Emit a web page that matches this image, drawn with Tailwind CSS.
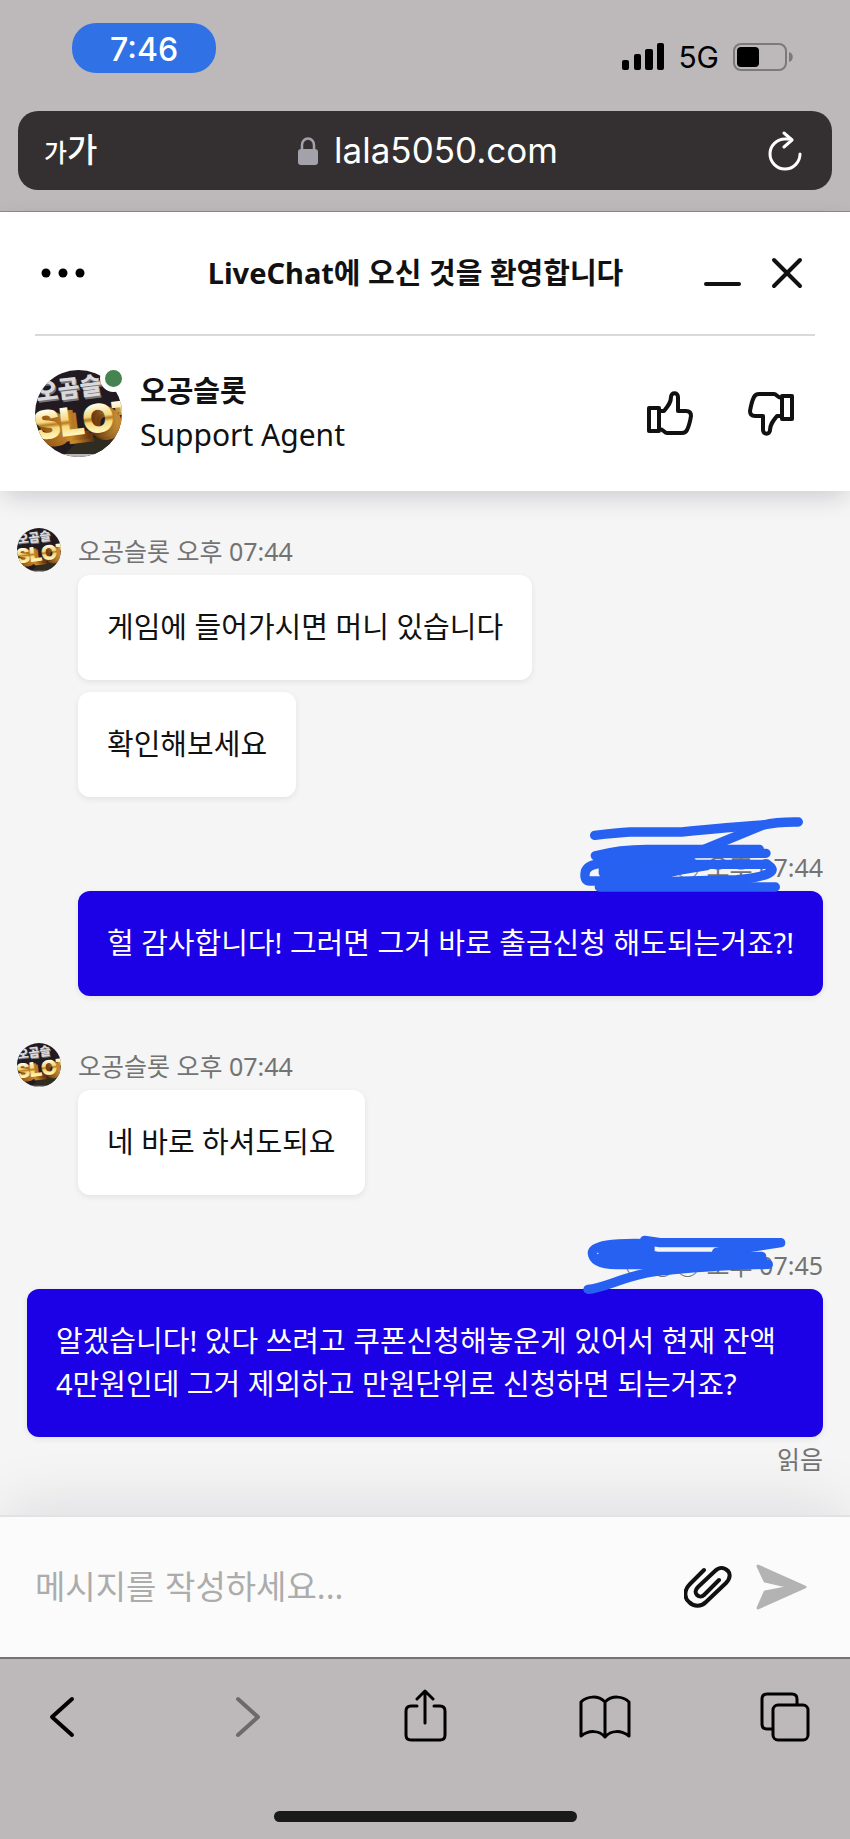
<!DOCTYPE html>
<html lang="ko">

<head>
    <meta charset="UTF-8">
    <meta name="viewport" content="width=device-width, initial-scale=1">
    <title>LiveChat</title>
    <script src="https://cdn.jsdelivr.net/npm/@tailwindcss/browser@4"></script>
</head>

<body class="min-h-screen flex flex-col bg-[#bdb9ba] text-[#111111] font-['Noto_Sans','Noto_Sans_CJK_KR',sans-serif]">

    <!-- Shared avatar artwork -->
    <svg class="absolute size-0" aria-hidden="true">
        <defs>
            <linearGradient id="gold" x1="0" y1="0" x2="0" y2="1">
                <stop offset="0.2" stop-color="#fffbe0" />
                <stop offset="0.45" stop-color="#f3d77c" />
                <stop offset="0.52" stop-color="#b87a24" />
                <stop offset="0.6" stop-color="#f5d878" />
                <stop offset="0.8" stop-color="#fff3b8" />
            </linearGradient>
            <linearGradient id="side" x1="0" y1="0" x2="1" y2="0">
                <stop offset="0" stop-color="#8a4f10" />
                <stop offset="0.3" stop-color="#c98a2c" />
                <stop offset="0.5" stop-color="#5c2d0a" />
                <stop offset="0.8" stop-color="#d09a3c" />
                <stop offset="1" stop-color="#6d3b0c" />
            </linearGradient>
            <clipPath id="round">
                <circle cx="43.5" cy="43.5" r="43.5" />
            </clipPath>
        </defs>
        <symbol id="avatar" viewBox="0 0 87 87">
            <g clip-path="url(#round)">
                <rect width="87" height="87" fill="#211a20" />
                <path d="M0 84h87v3H0z" fill="#b9b5b5" />
                <path d="M40 74l30-10 17 8v12H30z" fill="#2f2d22" />
                <g transform="rotate(-7 4 32)" font-family="'Noto Sans CJK KR', sans-serif" font-weight="900" font-size="24">
                    <text x="3" y="33" fill="#77757a">오곰슬</text>
                    <text x="2" y="31" fill="#d9d9dc">오곰슬</text>
                </g>
                <g transform="rotate(-7 3 74)" font-family="'Liberation Sans', sans-serif" font-weight="700" font-size="39">
                    <g fill="url(#side)" stroke="url(#side)" stroke-width="4">
                        <text x="8" y="76">SLOT</text>
                        <text x="5" y="73">SLOT</text>
                    </g>
                    <text x="1" y="69" fill="url(#gold)" stroke="url(#gold)" stroke-width="2">SLOT</text>
                </g>
            </g>
        </symbol>
    </svg>

    <!-- Phone status bar and address bar -->
    <header class="border-b border-[#8d8a8b] pt-[23px] pb-[21px] font-['Inter','Noto_Sans_CJK_KR',sans-serif]">
        <div class="flex justify-between pl-[72px] pr-[56px]">
            <div class="w-[144px] h-[50px] pt-1 rounded-[24px] bg-[#3072e6] text-white text-[32px] leading-[46px] font-medium text-center">7:46</div>
            <div class="flex items-center pt-[17px] text-black">
                <svg class="w-[42px] h-[28px]" viewBox="0 0 42 28">
                    <rect x="0" y="17" width="7" height="10" rx="2" />
                    <rect x="12" y="11" width="7" height="16" rx="2" />
                    <rect x="23" y="6" width="8" height="21" rx="2" />
                    <rect x="35" y="0" width="7" height="27" rx="2" />
                </svg>
                <span class="ml-[14px] text-[30px] leading-8">5G</span>
                <svg class="ml-[14px] w-[61px] h-[28px]" viewBox="0 0 61 28">
                    <rect x="1" y="1" width="52" height="26" rx="7" fill="none" stroke="#7d797b" stroke-width="2" />
                    <rect x="4" y="4" width="22" height="20" rx="4" />
                    <path d="M56 9c5 1 5 9 0 10z" fill="#7d797b" />
                </svg>
            </div>
        </div>
        <div class="mx-[18px] mt-[38px] h-[79px] rounded-[20px] bg-[#342f30] text-white flex items-center justify-between pl-[26px] pr-[30px]">
            <button type="button" class="w-[70px] text-left font-medium flex items-baseline" aria-label="텍스트 크기">
                <span class="text-[25px]">가</span><span class="text-[33px]">가</span>
            </button>
            <a href="#" class="flex items-center text-[35px]">
                <svg class="w-[20px] h-[28px] mr-4" viewBox="0 0 20 28">
                    <rect x="0" y="12" width="20" height="16" rx="3" fill="#a3a1a9" />
                    <path d="M4 13V8a6 6.500 0 0 1 12 0v5" fill="none" stroke="#a3a1a9" stroke-width="2.500" />
                </svg>
                lala5050.com
            </a>
            <button type="button" class="w-[60px] flex justify-end" aria-label="새로고침">
                <svg class="w-[34px] h-[40px]" viewBox="0 0 34 40" fill="none" stroke="white" stroke-width="3" stroke-linecap="round" stroke-linejoin="round">
                    <path d="M23 8h-6a15 15 0 1 0 15 15" />
                    <path d="M16 2l8 7-8 7" />
                </svg>
            </button>
        </div>
    </header>

    <!-- Chat header -->
    <section class="relative z-10 bg-white px-[35px] shadow-[0_8px_24px_-4px_rgba(20,20,50,0.2)]">
        <div class="h-[124px] border-b-2 border-[#d9d9d9] flex items-center justify-between pr-3 pl-[6px]">
            <button type="button" class="w-[86px]" aria-label="메뉴">
                <svg class="w-[48px] h-[12px]" viewBox="0 0 48 12">
                    <circle cx="5" cy="6" r="4.500" />
                    <circle cx="22" cy="6" r="4.500" />
                    <circle cx="39" cy="6" r="4.500" />
                </svg>
            </button>
            <h1 class="text-[29px] leading-[44px] font-bold">LiveChat에 오신 것을 환영합니다</h1>
            <div class="flex gap-[29px]">
                <button type="button" aria-label="최소화">
                    <svg class="w-[38px] h-[34px]" viewBox="0 0 38 34">
                        <path d="M2 28h33" stroke="#111" stroke-width="4" stroke-linecap="round" />
                    </svg>
                </button>
                <button type="button" aria-label="닫기">
                    <svg class="w-[32px] h-[34px]" viewBox="0 0 32 34">
                        <path d="M3 4l26 26M29 4L3 30" stroke="#111" stroke-width="4" stroke-linecap="round" />
                    </svg>
                </button>
            </div>
        </div>
        <div class="flex items-center pt-[33px] pb-[34px] pr-[21px]">
            <div class="relative size-[87px]">
                <svg class="size-full">
                    <use href="#avatar" />
                </svg>
                <span class="absolute -top-[5px] -right-[5px] size-[27px] rounded-full bg-[#458351] border-5 border-white"></span>
            </div>
            <div class="ml-[18px] grow leading-[44px]">
                <p class="text-[29px] font-bold">오공슬롯</p>
                <p class="text-[30px]">Support Agent</p>
            </div>
            <div class="flex gap-[55px]">
                <button type="button" aria-label="좋아요">
                    <svg class="w-[46px] h-[46px]" viewBox="0 0 46 46" fill="none" stroke="#111" stroke-width="4" stroke-linejoin="round">
                        <path d="M2 18h10v23H2z" />
                        <path d="M12 21h5c5-6 7-9 7-14 0-5 7-5 7 0v14h8c4 0 5 2 5 5-1 6-2 10-4 14-1 2-2 3-5 3H20c-3 0-3-4-8-4" />
                    </svg>
                </button>
                <button type="button" aria-label="싫어요">
                    <svg class="w-[46px] h-[46px] rotate-180" viewBox="0 0 46 46" fill="none" stroke="#111" stroke-width="4" stroke-linejoin="round">
                        <path d="M2 17h10v23H2z" />
                        <path d="M12 20h5c5-6 7-9 7-14 0-5 7-5 7 0v14h8c4 0 5 2 5 5-1 6-2 10-4 14-1 2-2 3-5 3H20c-3 0-3-4-8-4" />
                    </svg>
                </button>
            </div>
        </div>
    </section>

    <!-- Messages -->
    <main class="grow bg-[#f5f5f5] pt-9 pb-[34px] flex flex-col gap-[46px] text-[29px] leading-[43px] break-keep overflow-hidden">
        <div class="flex gap-[17px] px-[17px]">
            <svg class="mt-px size-[44px] shrink-0">
                <use href="#avatar" />
            </svg>
            <div class="flex flex-col items-start gap-3">
                <div>
                    <p class="text-[25px] leading-[48px] text-[#737373]">오공슬롯 오후 07:44</p>
                    <p class="bg-white rounded-[12px] px-[29px] pt-[30px] pb-[32px] shadow-[0_2px_6px_rgba(0,0,0,0.08)]">게임에 들어가시면 머니 있습니다</p>
                </div>
                <p class="bg-white rounded-[12px] px-[29px] pt-[30px] pb-[32px] shadow-[0_2px_6px_rgba(0,0,0,0.08)]">확인해보세요</p>
            </div>
        </div>

        <div class="flex flex-col items-end px-[27px]">
            <div class="relative z-10 text-[25px] leading-[48px] text-[#737373]">
                ○○○ 오후 07:44
                <!-- Pen marks over the visitor's name -->
                <svg class="absolute right-0 -top-[30px] w-[250px] h-[80px]" viewBox="69 36 750 240" fill="none" stroke="#2761f2" stroke-width="28" stroke-linecap="round" stroke-linejoin="round">
                    <path d="M134 103Q200 95 240 93H395Q540 78 640 72 680 62 745 63" />
                    <path d="M640 72L460 146" />
                    <path d="M136 164Q210 145 290 145H628M150 168L400 158 648 157" />
                    <path d="M160 190L420 172M330 190L650 190Q680 205 655 218 620 232 560 236L200 246" />
                    <path d="M145 188Q105 195 105 220 103 240 120 240H190L470 194" />
                    <path d="M160 185V215Q165 230 190 222L330 222 440 194" fill="#2761f2" />
                    <path d="M148 258H676M200 240L560 244" />
                </svg>
            </div>
            <p class="bg-[#1c00e6] text-white rounded-[12px] px-[29px] pt-[30px] pb-[32px] shadow-[0_2px_6px_rgba(0,0,0,0.08)]">헐 감사합니다! 그러면 그거 바로 출금신청 해도되는거죠?!</p>
        </div>

        <div class="flex gap-[17px] px-[17px]">
            <svg class="mt-px size-[44px] shrink-0">
                <use href="#avatar" />
            </svg>
            <div>
                <p class="text-[25px] leading-[48px] text-[#737373]">오공슬롯 오후 07:44</p>
                <p class="bg-white rounded-[12px] px-[29px] pt-[30px] pb-[32px] shadow-[0_2px_6px_rgba(0,0,0,0.08)]">네 바로 하셔도되요</p>
            </div>
        </div>

        <div class="flex flex-col items-end px-[27px]">
            <div class="relative z-10 text-[25px] leading-[48px] text-[#737373]">
                ○○○ 오후 07:45
                <svg class="absolute right-0 -top-[10px] w-[250px] h-[64px]" viewBox="69 60 750 192" fill="none" stroke="#2761f2" stroke-width="28" stroke-linecap="round" stroke-linejoin="round">
                    <path d="M284 88L330 95H692L500 124" />
                    <path d="M300 98Q128 92 127 126 130 160 200 161H400L300 130Z" fill="#2761f2" />
                    <path d="M160 136H635M250 152H640" />
                    <path d="M655 160Q400 167 290 186C200 205 160 232 114 235" />
                    <path d="M400 160L290 184" />
                    <circle cx="143" cy="127" r="1" stroke="#f5f5f5" stroke-width="2" />
                </svg>
            </div>
            <p class="bg-[#1c00e6] text-white rounded-[12px] px-[29px] pt-[30px] pb-[32px] shadow-[0_2px_6px_rgba(0,0,0,0.08)]">알겠습니다! 있다 쓰려고 쿠폰신청해놓운게 있어서 현재 잔액 4만원인데 그거 제외하고 만원단위로 신청하면 되는거죠?</p>
            <p class="text-[25px] leading-[44px] text-[#737373]">읽음</p>
        </div>
    </main>

    <!-- Message box -->
    <form class="relative h-[142px] border-t-2 border-[#e2e2e4] bg-[#fbfbfb] pl-[35px] pr-[43px] flex items-center shadow-[0_-16px_60px_-6px_rgba(20,20,50,0.1)]">
        <input type="text" aria-label="메시지" placeholder="메시지를 작성하세요..." class="grow min-w-0 text-[33px] leading-[48px] outline-none placeholder:text-[#acacac]">
        <button type="button" aria-label="파일 첨부">
            <svg class="w-[48px] h-[44px]" viewBox="0 0 48 44" fill="none" stroke="#111" stroke-width="4" stroke-linecap="round" stroke-linejoin="round">
                <path d="M20 5L6 19C-1 26 1 34 5 37c5 5 12 5 17 0L42 18c5-5 4-10 2-12-4-4-9-4-13 0L14 22c-3 3-3 6-1 8 2 2 5 2 7 0l15-15" />
            </svg>
        </button>
        <button type="submit" class="ml-6" aria-label="보내기">
            <svg class="w-[51px] h-[48px]" viewBox="0 0 51 48" fill="#b3b3b3" stroke="#b3b3b3" stroke-linejoin="round">
                <path d="M2 3l47 21L2 45l7-16 26-5L9 18z" stroke-width="3" />
            </svg>
        </button>
    </form>

    <!-- Browser toolbar -->
    <footer class="relative bg-[#bdb9ba] border-t-2 border-[#767374] pt-[30px] pb-[17px]">
        <nav class="flex justify-between px-[36px]">
            <button type="button" aria-label="뒤로">
                <svg class="w-[52px] h-[56px]" viewBox="0 0 52 56" fill="none" stroke="black" stroke-width="4" stroke-linecap="round" stroke-linejoin="round">
                    <path d="M36 10L16 28l20 18" />
                </svg>
            </button>
            <button type="button" aria-label="앞으로">
                <svg class="w-[52px] h-[56px]" viewBox="0 0 52 56" fill="none" stroke="#6d6a6b" stroke-width="4" stroke-linecap="round" stroke-linejoin="round">
                    <path d="M20 10l20 18-20 18" />
                </svg>
            </button>
            <button type="button" aria-label="공유">
                <svg class="w-[52px] h-[56px]" viewBox="0 0 52 56" fill="none" stroke="black" stroke-width="3" stroke-linecap="round" stroke-linejoin="round">
                    <path d="M18 17h-6q-5 0-5 5v24q0 5 5 5h29q5 0 5-5V22q0-5-5-5h-6" />
                    <path d="M26 34V2M18 10l8-8 8 8" />
                </svg>
            </button>
            <button type="button" aria-label="책갈피">
                <svg class="w-[52px] h-[56px] overflow-visible" viewBox="2 0 52 56" fill="none" stroke="black" stroke-width="3" stroke-linecap="round" stroke-linejoin="round">
                    <path d="M26 13C19 6 8 7 2 13v34c8-6 18-6 24 1 6-7 16-7 24-1V13C44 7 33 6 26 13zM26 13v35" />
                </svg>
            </button>
            <button type="button" aria-label="탭">
                <svg class="w-[52px] h-[56px] overflow-visible" viewBox="2 0 52 56" fill="none" stroke="black" stroke-width="3">
                    <path d="M13 40H7q-5 0-5-5V10q0-5 5-5h25q5 0 5 5v6" />
                    <rect x="13" y="16" width="35" height="35" rx="5" />
                </svg>
            </button>
        </nav>
        <div class="mx-auto mt-[66px] w-[303px] h-[11px] rounded-full bg-[#1a1a1a]"></div>
    </footer>
</body>

</html>
